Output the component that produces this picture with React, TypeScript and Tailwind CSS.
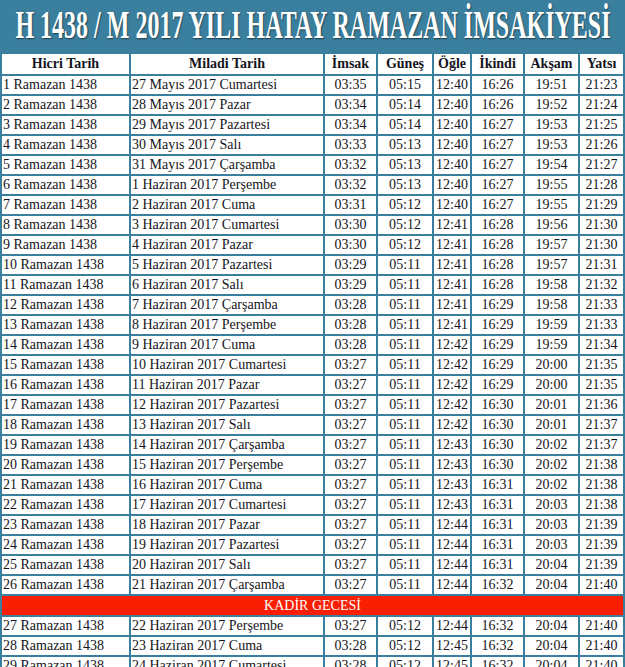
type Row = [string, string, string, string, string, string, string, string]

const rows: Row[] = [
  ['1 Ramazan 1438', '27 Mayıs 2017 Cumartesi', '03:35', '05:15', '12:40', '16:26', '19:51', '21:23'],
  ['2 Ramazan 1438', '28 Mayıs 2017 Pazar', '03:34', '05:14', '12:40', '16:26', '19:52', '21:24'],
  ['3 Ramazan 1438', '29 Mayıs 2017 Pazartesi', '03:34', '05:14', '12:40', '16:27', '19:53', '21:25'],
  ['4 Ramazan 1438', '30 Mayıs 2017 Salı', '03:33', '05:13', '12:40', '16:27', '19:53', '21:26'],
  ['5 Ramazan 1438', '31 Mayıs 2017 Çarşamba', '03:32', '05:13', '12:40', '16:27', '19:54', '21:27'],
  ['6 Ramazan 1438', '1 Haziran 2017 Perşembe', '03:32', '05:13', '12:40', '16:27', '19:55', '21:28'],
  ['7 Ramazan 1438', '2 Haziran 2017 Cuma', '03:31', '05:12', '12:40', '16:27', '19:55', '21:29'],
  ['8 Ramazan 1438', '3 Haziran 2017 Cumartesi', '03:30', '05:12', '12:41', '16:28', '19:56', '21:30'],
  ['9 Ramazan 1438', '4 Haziran 2017 Pazar', '03:30', '05:12', '12:41', '16:28', '19:57', '21:30'],
  ['10 Ramazan 1438', '5 Haziran 2017 Pazartesi', '03:29', '05:11', '12:41', '16:28', '19:57', '21:31'],
  ['11 Ramazan 1438', '6 Haziran 2017 Salı', '03:29', '05:11', '12:41', '16:28', '19:58', '21:32'],
  ['12 Ramazan 1438', '7 Haziran 2017 Çarşamba', '03:28', '05:11', '12:41', '16:29', '19:58', '21:33'],
  ['13 Ramazan 1438', '8 Haziran 2017 Perşembe', '03:28', '05:11', '12:41', '16:29', '19:59', '21:33'],
  ['14 Ramazan 1438', '9 Haziran 2017 Cuma', '03:28', '05:11', '12:42', '16:29', '19:59', '21:34'],
  ['15 Ramazan 1438', '10 Haziran 2017 Cumartesi', '03:27', '05:11', '12:42', '16:29', '20:00', '21:35'],
  ['16 Ramazan 1438', '11 Haziran 2017 Pazar', '03:27', '05:11', '12:42', '16:29', '20:00', '21:35'],
  ['17 Ramazan 1438', '12 Haziran 2017 Pazartesi', '03:27', '05:11', '12:42', '16:30', '20:01', '21:36'],
  ['18 Ramazan 1438', '13 Haziran 2017 Salı', '03:27', '05:11', '12:42', '16:30', '20:01', '21:37'],
  ['19 Ramazan 1438', '14 Haziran 2017 Çarşamba', '03:27', '05:11', '12:43', '16:30', '20:02', '21:37'],
  ['20 Ramazan 1438', '15 Haziran 2017 Perşembe', '03:27', '05:11', '12:43', '16:30', '20:02', '21:38'],
  ['21 Ramazan 1438', '16 Haziran 2017 Cuma', '03:27', '05:11', '12:43', '16:31', '20:02', '21:38'],
  ['22 Ramazan 1438', '17 Haziran 2017 Cumartesi', '03:27', '05:11', '12:43', '16:31', '20:03', '21:38'],
  ['23 Ramazan 1438', '18 Haziran 2017 Pazar', '03:27', '05:11', '12:44', '16:31', '20:03', '21:39'],
  ['24 Ramazan 1438', '19 Haziran 2017 Pazartesi', '03:27', '05:11', '12:44', '16:31', '20:03', '21:39'],
  ['25 Ramazan 1438', '20 Haziran 2017 Salı', '03:27', '05:11', '12:44', '16:31', '20:04', '21:39'],
  ['26 Ramazan 1438', '21 Haziran 2017 Çarşamba', '03:27', '05:11', '12:44', '16:32', '20:04', '21:40'],
]

const lateRows: Row[] = [
  ['27 Ramazan 1438', '22 Haziran 2017 Perşembe', '03:27', '05:12', '12:44', '16:32', '20:04', '21:40'],
  ['28 Ramazan 1438', '23 Haziran 2017 Cuma', '03:28', '05:12', '12:45', '16:32', '20:04', '21:40'],
  ['29 Ramazan 1438', '24 Haziran 2017 Cumartesi', '03:28', '05:12', '12:45', '16:32', '20:04', '21:40'],
  ['30 Ramazan 1438', '25 Haziran 2017 Pazar', '03:28', '05:12', '12:45', '16:32', '20:04', '21:40'],
]

const headers = ['Hicri Tarih', 'Miladi Tarih', 'İmsak', 'Güneş', 'Öğle', 'İkindi', 'Akşam', 'Yatsı']

function DayRow({ row }: { row: Row }) {
  return (
    <tr>
      {row.map((cell, i) => (
        <td
          key={i}
          className={`h-[18px] bg-white p-0 text-[14px] leading-[18px] whitespace-nowrap text-[#141420] ${
            i < 2 ? 'pl-[1px] text-left' : 'text-center'
          }`}
        >
          {cell}
        </td>
      ))}
    </tr>
  )
}

export default function App() {
  return (
    <div className="min-h-screen bg-[#3b7f9f] font-['Liberation_Serif','Times_New_Roman',serif]">
      {/* Title */}
      <div className="flex h-[52px] items-center justify-center overflow-hidden pb-[2px]">
        <h1 className="inline-block scale-x-[0.6] text-[40px] leading-none font-bold whitespace-nowrap text-white [text-shadow:1px_1px_2px_rgba(0,0,0,0.55)]">
          H 1438 / M 2017 YILI HATAY RAMAZAN İMSAKİYESİ
        </h1>
      </div>

      {/* Table */}
      <table className="w-[625px] table-fixed border-separate border-spacing-[2px] font-['Liberation_Serif','Times_New_Roman',serif]">
        <colgroup>
          <col className="w-[127px]" />
          <col className="w-[192px]" />
          <col className="w-[51px]" />
          <col className="w-[54px]" />
          <col className="w-[36px]" />
          <col className="w-[51px]" />
          <col className="w-[53px]" />
          <col className="w-[43px]" />
        </colgroup>
        <thead>
          <tr>
            {headers.map((h) => (
              <th
                key={h}
                className="h-[20px] bg-white p-0 text-center text-[14px] leading-[20px] font-bold whitespace-nowrap text-[#141420]"
              >
                {h}
              </th>
            ))}
          </tr>
        </thead>
        <tbody>
          {rows.map((r) => (
            <DayRow key={r[0]} row={r} />
          ))}
          <tr>
            <td
              colSpan={8}
              className="h-[19px] bg-[#fa1e02] p-0 text-center text-[14px] leading-[19px] text-white"
            >
              KADİR GECESİ
            </td>
          </tr>
          {lateRows.map((r) => (
            <DayRow key={r[0]} row={r} />
          ))}
        </tbody>
      </table>
    </div>
  )
}
